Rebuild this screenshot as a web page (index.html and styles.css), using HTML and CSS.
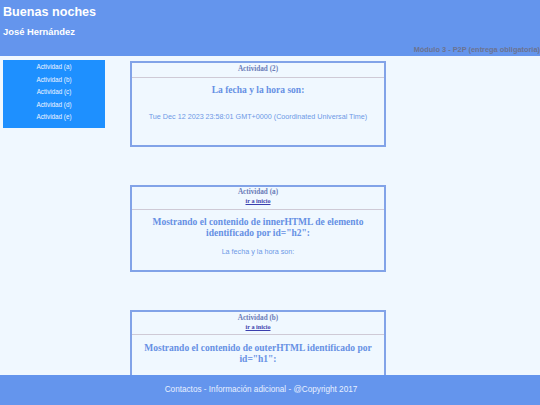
FILE: index.html
```html
<!DOCTYPE html>
<html lang="es">
<head>
<meta charset="utf-8">
<title>Buenas noches</title>
<link rel="stylesheet" href="styles.css">
</head>
<body>
<header class="top">
  <h1 class="greeting">Buenas noches</h1>
  <p class="author">José Hernández</p>
  <p class="module">Módulo 3 - P2P (entrega obligatoria)</p>
</header>
<div class="main">
  <nav class="menu">
    <a class="menu-item" href="#a">Actividad (a)</a>
    <a class="menu-item" href="#b">Actividad (b)</a>
    <a class="menu-item" href="#c">Actividad (c)</a>
    <a class="menu-item" href="#d">Actividad (d)</a>
    <a class="menu-item" href="#e">Actividad (e)</a>
  </nav>
  <div class="cards">
    <section class="card" id="inicio">
      <div class="card-head">
        <div class="card-title">Actividad (2)</div>
      </div>
      <div class="card-body">
        <h2 class="card-h">La fecha y la hora son:</h2>
        <p class="card-text card-text-date">Tue Dec 12 2023 23:58:01 GMT+0000 (Coordinated Universal Time)</p>
      </div>
    </section>
    <section class="card" id="a">
      <div class="card-head">
        <div class="card-title">Actividad (a)</div>
        <a class="card-link" href="#inicio">ir a inicio</a>
      </div>
      <div class="card-body">
        <h2 class="card-h">Mostrando el contenido de innerHTML de elemento identificado por id="h2":</h2>
        <p class="card-text">La fecha y la hora son:</p>
      </div>
    </section>
    <section class="card" id="b">
      <div class="card-head">
        <div class="card-title">Actividad (b)</div>
        <a class="card-link" href="#inicio">ir a inicio</a>
      </div>
      <div class="card-body card-body-tall">
        <h2 class="card-h">Mostrando el contenido de outerHTML identificado por id="h1":</h2>
      </div>
    </section>
  </div>
</div>
<footer class="foot">Contactos - Información adicional - @Copyright 2017</footer>
</body>
</html>
```

FILE: styles.css
```css
html, body {
  margin: 0;
  padding: 0;
}
body {
  background: #f0f8ff;
  font-family: "Liberation Sans", Arial, sans-serif;
  padding-bottom: 40px;
}
.top {
  background: #6495ed;
  padding: 5px 0 2px 3px;
  display: flex;
  flex-direction: column;
}
.greeting {
  margin: 0;
  font-size: 12.6px;
  line-height: 14px;
  font-weight: bold;
  color: #ffffff;
}
.author {
  margin: 6.5px 0 0;
  font-size: 9.4px;
  line-height: 11px;
  font-weight: bold;
  color: #ffffff;
}
.module {
  margin: 8.5px 0 0;
  font-size: 7.4px;
  line-height: 9px;
  font-weight: bold;
  color: #6c7390;
  text-align: right;
  white-space: nowrap;
}
.main {
  display: flex;
  align-items: flex-start;
  gap: 25px;
  padding: 4px 0 0 3px;
}
.menu {
  width: 102px;
  background: #1e90ff;
  display: flex;
  flex-direction: column;
  padding: 1px 0 4px;
}
.menu-item {
  display: block;
  text-align: center;
  font-size: 6.3px;
  line-height: 12.6px;
  color: #eef5ff;
  text-decoration: none;
}
.cards {
  width: 256px;
  padding-top: 1px;
  display: flex;
  flex-direction: column;
  gap: 38px;
}
.card {
  border: 2px solid #82a3e8;
  background: #f0f8ff;
}
.card-head {
  text-align: center;
  padding: 1.5px 0 3px;
  border-bottom: 1px solid #cfcad6;
  font-family: "Liberation Serif", "Times New Roman", serif;
  font-weight: bold;
}
.card-title {
  font-size: 7.2px;
  line-height: 9px;
  color: #6b7cb8;
}
.card-link {
  display: block;
  font-size: 6.2px;
  line-height: 8.5px;
  color: #3b3fae;
  text-decoration: underline;
}
.card-body {
  text-align: center;
  padding: 7.5px 10px 13.5px;
}
.card-body-tall {
  padding-bottom: 40px;
}
.card-h {
  margin: 0;
  font-family: "Liberation Serif", "Times New Roman", serif;
  font-size: 9.5px;
  line-height: 11px;
  font-weight: bold;
  color: #6690e4;
}
.card-text {
  margin: 9px 0 0;
  font-size: 7.2px;
  line-height: 8.5px;
  color: #6e98e6;
}
.card-text-date {
  margin: 16.5px 0 10px;
}
.foot {
  position: fixed;
  left: 0;
  right: 0;
  bottom: 0;
  height: 30px;
  background: #6495ed;
  color: #e8f0ff;
  font-size: 8.2px;
  line-height: 30px;
  text-align: center;
  padding-right: 18px;
}
```
